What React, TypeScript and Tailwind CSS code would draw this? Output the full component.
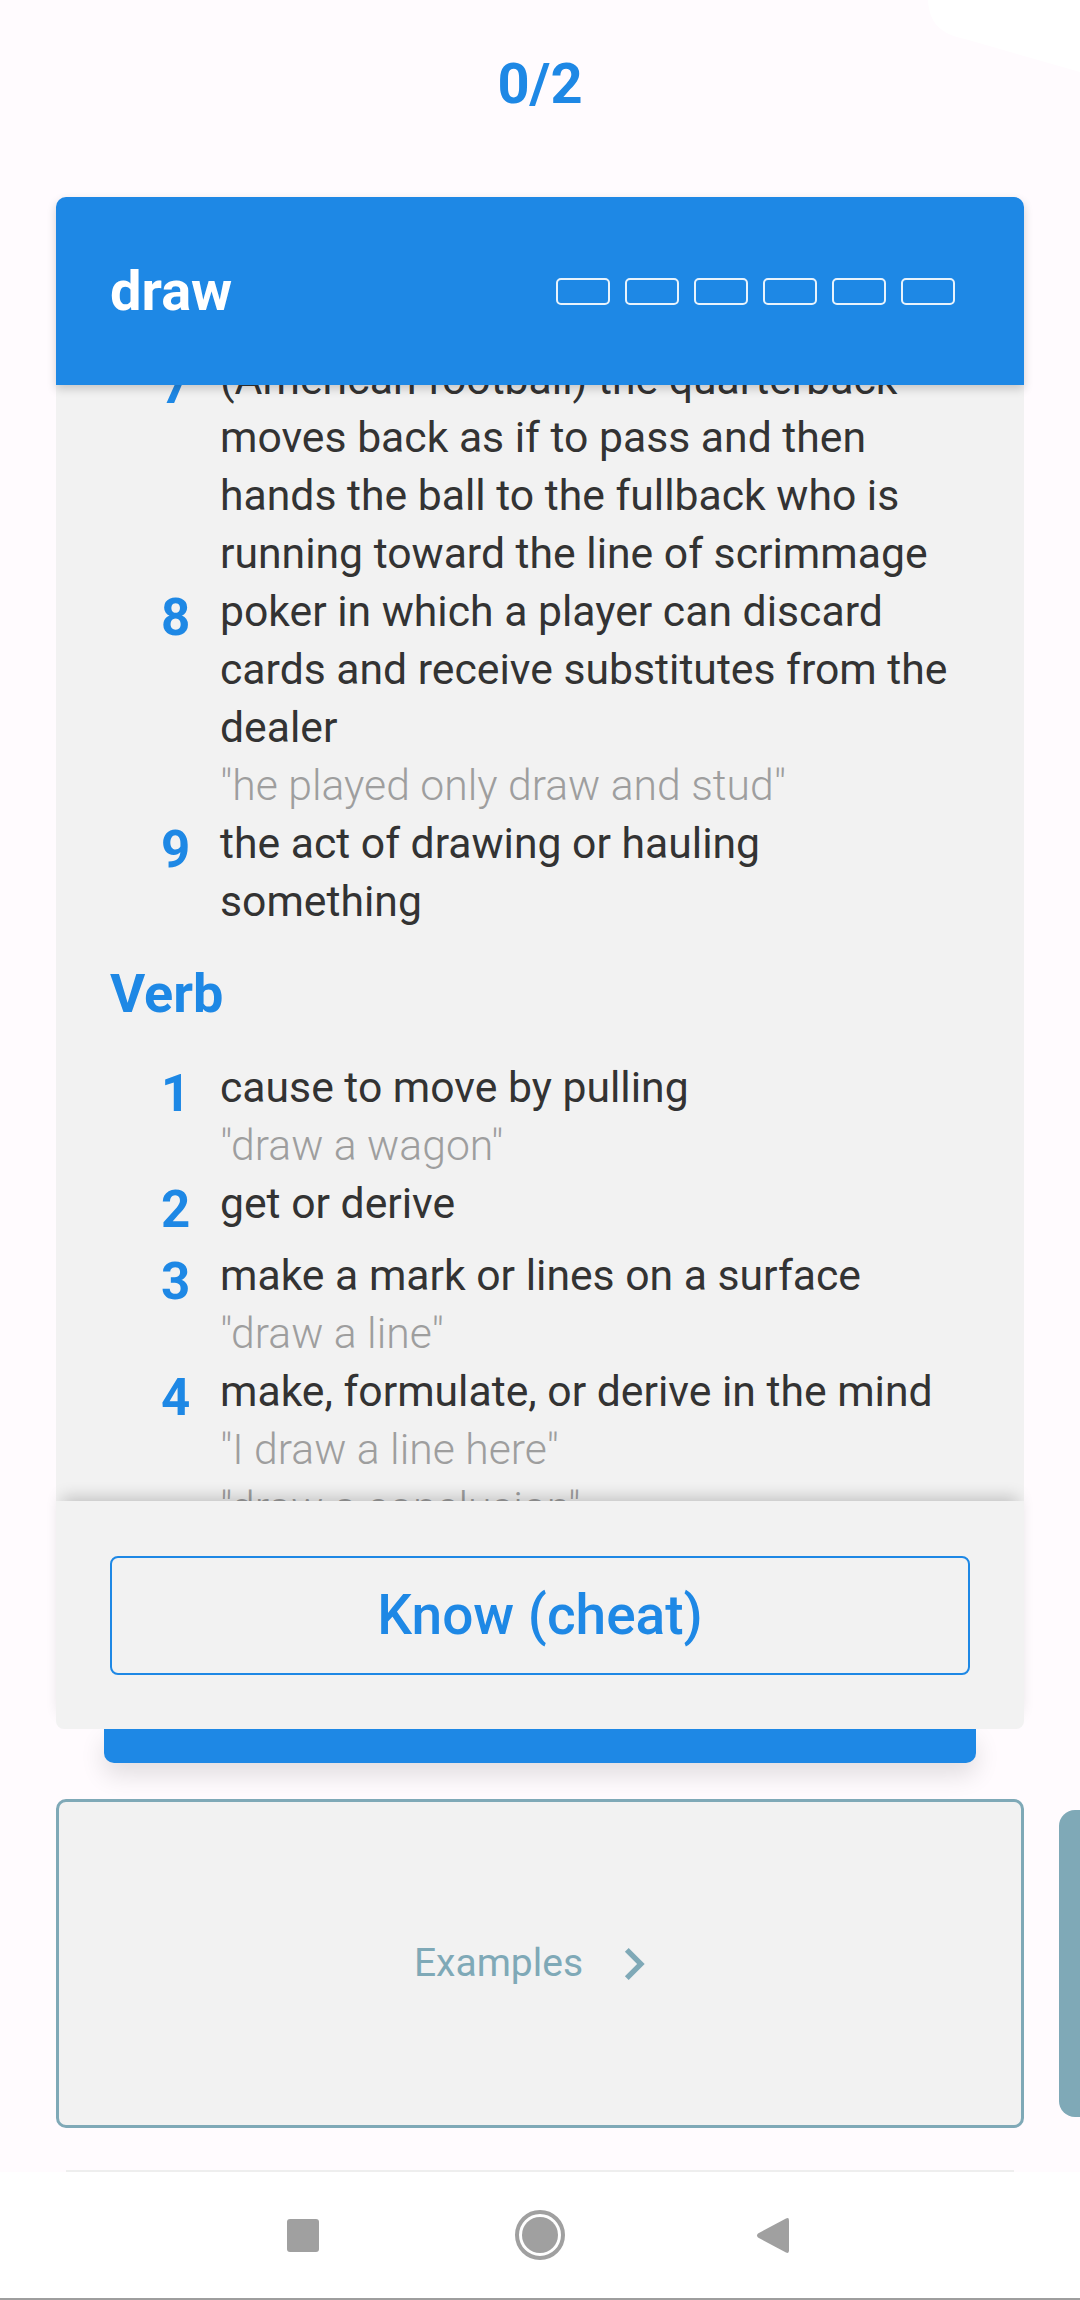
import React from 'react'

type Sense = { n: number; lines: string[]; examples?: string[] }

const nounSenses: Sense[] = [
  {
    n: 7,
    lines: [
      '(American football) the quarterback',
      'moves back as if to pass and then',
      'hands the ball to the fullback who is',
      'running toward the line of scrimmage',
    ],
  },
  {
    n: 8,
    lines: ['poker in which a player can discard', 'cards and receive substitutes from the', 'dealer'],
    examples: ['"he played only draw and stud"'],
  },
  { n: 9, lines: ['the act of drawing or hauling', 'something'] },
]

const verbSenses: Sense[] = [
  { n: 1, lines: ['cause to move by pulling'], examples: ['"draw a wagon"'] },
  { n: 2, lines: ['get or derive'] },
  { n: 3, lines: ['make a mark or lines on a surface'], examples: ['"draw a line"'] },
  {
    n: 4,
    lines: ['make, formulate, or derive in the mind'],
    examples: ['"I draw a line here"', '"draw a conclusion"'],
  },
]

function SenseRow({ sense }: { sense: Sense }) {
  return (
    <div className="flex">
      <div className="w-[59px] shrink-0 text-[51px] font-bold leading-[72px] text-[#1E88E5]">{sense.n}</div>
      <div className="flex-1">
        {sense.lines.map((line) => (
          <div key={line} className="whitespace-nowrap text-[42.7px] leading-[58px] text-[#333333]">
            {line}
          </div>
        ))}
        {sense.examples?.map((ex) => (
          <div key={ex} className="whitespace-nowrap text-[42.7px] font-light leading-[58px] text-[#9E9E9E]">
            {ex}
          </div>
        ))}
      </div>
    </div>
  )
}

function FlashCard() {
  return (
    <div className="mx-[56px]">
      <div className="relative z-10 flex h-[188px] items-center justify-between rounded-t-[10px] bg-[#1E88E5] pl-[54px] pr-[69px] shadow-[0_4px_10px_rgba(0,0,0,0.18)]">
        <span className="text-[56px] font-bold leading-none text-white">draw</span>
        <div className="flex gap-[15px]">
          {[0, 1, 2, 3, 4, 5].map((i) => (
            <div key={i} className="h-[27px] w-[54px] rounded-[5px] border-[2.5px] border-white/90" />
          ))}
        </div>
      </div>

      <div className="h-[1116px] overflow-hidden bg-[#F2F2F2] px-[54px]">
        <div className="-mt-[35px]">
          <div className="pl-[51px]">
            {nounSenses.map((s) => (
              <SenseRow key={s.n} sense={s} />
            ))}
          </div>
          <h2 className="mb-[32px] mt-[32px] text-[54px] font-bold leading-[64px] text-[#1E88E5]">Verb</h2>
          <div className="pl-[51px]">
            {verbSenses.map((s) => (
              <SenseRow key={s.n} sense={s} />
            ))}
          </div>
        </div>
      </div>

      <div className="relative z-10 flex h-[228px] items-center rounded-b-[8px] bg-[#F2F2F2] px-[54px] shadow-[0_-10px_16px_-6px_rgba(0,0,0,0.2)]">
        <button className="flex h-[119px] w-full items-center justify-center rounded-[8px] border-[2.5px] border-[#1E88E5] text-[55px] font-medium text-[#1E88E5]">
          Know (cheat)
        </button>
      </div>
    </div>
  )
}

export default function App() {
  return (
    <div className="relative flex h-[2300px] w-[1080px] flex-col overflow-hidden bg-[#FFFBFE] font-['Roboto','Liberation_Sans',sans-serif]">
      <svg className="absolute right-0 top-0" width="152" height="80" viewBox="928 0 152 80">
        <path d="M928 0 C929 22 940 34 965 39 L1080 72 L1080 0 Z" fill="#FFFFFF" />
      </svg>

      <div className="relative flex h-[197px] justify-center pt-[51px]">
        <span className="text-[56px] font-bold leading-[66px] text-[#1E88E5]">0/2</span>
      </div>

      <FlashCard />

      {/* next card peeking out under the current one */}
      <div className="mx-[104px] h-[34px] rounded-b-[10px] bg-[#1E88E5] shadow-[0_12px_24px_rgba(0,0,0,0.12)]" />

      <div className="mt-[36px] flex items-center gap-[35px] overflow-hidden pl-[56px]">
        <div className="flex h-[329px] w-[968px] shrink-0 items-center justify-center gap-[19px] rounded-[10px] border-[3px] border-[#7FA9B7] bg-[#F2F2F2]">
          <span className="text-[39px] leading-none text-[#7FA9B7]">Examples</span>
          <svg width="64" height="64" viewBox="0 0 24 24">
            <path d="M10 6L8.59 7.41 13.17 12l-4.58 4.59L10 18l6-6z" fill="#7FA9B7" />
          </svg>
        </div>
        <div className="h-[307px] w-[60px] shrink-0 rounded-l-[16px] bg-[#7FA9B7]" />
      </div>

      <div className="mx-[66px] mt-[42px] h-[2px] bg-[#EEEEEE]" />

      <div className="flex h-[126px] items-center justify-center bg-white pr-[4px]">
        <div className="h-[33px] w-[32px] rounded-[3px] bg-[#A0A0A0]" />
        <div className="ml-[196px] flex h-[50px] w-[50px] items-center justify-center rounded-full border-[4px] border-[#A0A0A0]">
          <div className="h-[36px] w-[36px] rounded-full bg-[#A0A0A0]" />
        </div>
        <svg className="ml-[191px]" width="33" height="37" viewBox="0 0 33 37">
          <path d="M30 1.5 Q33 0 33 3.5 L33 33.5 Q33 37 30 35.5 L2 20.5 Q0 18.5 2 16.5 Z" fill="#A0A0A0" />
        </svg>
      </div>

      <div className="h-[2px] bg-[#9E9E9E]" />
    </div>
  )
}
